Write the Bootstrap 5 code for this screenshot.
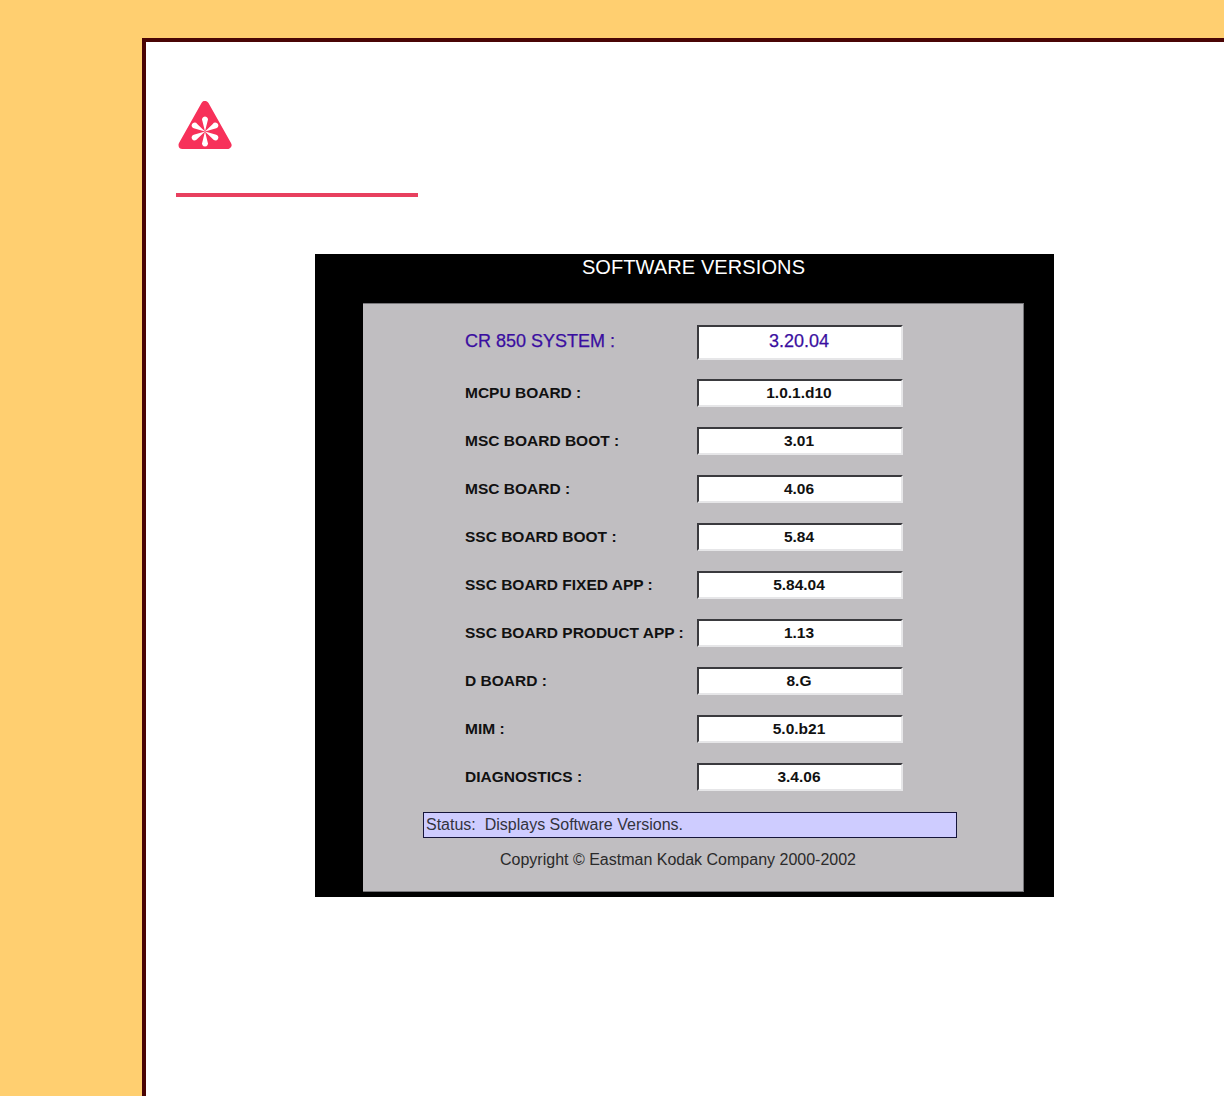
<!DOCTYPE html>
<html lang="en">
<head>
<meta charset="utf-8">
<title>Software Versions</title>
<link rel="stylesheet" href="https://cdn.jsdelivr.net/npm/bootstrap@5.3.0/dist/css/bootstrap.min.css">
<style>
html, body { height: 100%; }
body { background: #ffcf70; margin: 0; overflow: hidden; font-family: "Liberation Sans", Arial, sans-serif; }
.sheet { margin: 38px 0 0 142px; height: 1058px; background: #fff; border-top: 4px solid #4a0505; border-left: 4px solid #4a0505; padding: 59px 0 0 30px; }
.warn-icon { display: block; margin-left: 2px; width: 54px; height: 48px; }
.warn-rule { width: 242px; height: 4px; background: #e8405f; margin-top: 44px; }
.shot { width: 739px; height: 643px; margin: 57px 0 0 139px; background: #000; padding: 0 30px 5px 48px; }
.shot-title { height: 49px; color: #fff; font-size: 20px; line-height: 26px; text-align: center; letter-spacing: .1px; }
.shot-panel { height: 589px; background: #c0bec1; padding: 21px 0 0 102px; border: 1px solid #77767a; border-width: 1px 1px 1px 0; color: #111; }
.ver-row { height: 28px; margin-bottom: 20px; font-weight: 700; font-size: 15.5px; }
.ver-row.sys { height: 35px; margin-bottom: 19px; font-size: 18px; font-weight: 400; color: #3a0ea0; -webkit-text-stroke: .25px #3a0ea0; }
.ver-row.sys .ver-label { padding-bottom: 2px; }
.ver-row.sys .ver-box { padding-bottom: 2px; }
.ver-label { width: 232px; flex: none; }
.ver-box { width: 206px; height: 100%; background: #fff; border: 2px solid; border-color: #3a3a3e #e6e6e8 #e6e6e8 #3a3a3e; display: flex; align-items: center; justify-content: center; padding-right: 2px; }
.status-bar { width: 534px; height: 26px; margin: 21px 0 0 -42px; border: 1px solid #15153a; background: #ceccff; color: #33333d; font-size: 16px; line-height: 24px; padding-left: 2px; white-space: pre; }
.copy-line { width: 355px; margin: 11px 0 0 35px; font-size: 16px; line-height: 22px; color: #2a2a2a; white-space: nowrap; text-align: center; }
</style>
</head>
<body>
<div class="sheet">
  <svg class="warn-icon" viewBox="0 0 54 48" aria-hidden="true">
    <path d="M27 4 L49.5 44 L4.5 44 Z" fill="#f7315a" stroke="#f7315a" stroke-width="8" stroke-linejoin="round"/>
    <g fill="#fff">
      <path id="pt" d="M27 30.5 L24.4 20 a3 3 0 1 1 5.2 0 Z"/>
      <use href="#pt" transform="rotate(60 27 30.5)"/>
      <use href="#pt" transform="rotate(120 27 30.5)"/>
      <use href="#pt" transform="rotate(180 27 30.5)"/>
      <use href="#pt" transform="rotate(240 27 30.5)"/>
      <use href="#pt" transform="rotate(300 27 30.5)"/>
    </g>
  </svg>
  <div class="warn-rule"></div>
  <div class="shot">
    <div class="shot-title">SOFTWARE VERSIONS</div>
    <div class="shot-panel">
      <div class="ver-row sys d-flex align-items-center"><div class="ver-label">CR 850 SYSTEM :</div><div class="ver-box">3.20.04</div></div>
      <div class="ver-row d-flex align-items-center"><div class="ver-label">MCPU BOARD :</div><div class="ver-box">1.0.1.d10</div></div>
      <div class="ver-row d-flex align-items-center"><div class="ver-label">MSC BOARD BOOT :</div><div class="ver-box">3.01</div></div>
      <div class="ver-row d-flex align-items-center"><div class="ver-label">MSC BOARD :</div><div class="ver-box">4.06</div></div>
      <div class="ver-row d-flex align-items-center"><div class="ver-label">SSC BOARD BOOT :</div><div class="ver-box">5.84</div></div>
      <div class="ver-row d-flex align-items-center"><div class="ver-label">SSC BOARD FIXED APP :</div><div class="ver-box">5.84.04</div></div>
      <div class="ver-row d-flex align-items-center"><div class="ver-label">SSC BOARD PRODUCT APP :</div><div class="ver-box">1.13</div></div>
      <div class="ver-row d-flex align-items-center"><div class="ver-label">D BOARD :</div><div class="ver-box">8.G</div></div>
      <div class="ver-row d-flex align-items-center"><div class="ver-label">MIM :</div><div class="ver-box">5.0.b21</div></div>
      <div class="ver-row d-flex align-items-center"><div class="ver-label">DIAGNOSTICS :</div><div class="ver-box">3.4.06</div></div>
      <div class="status-bar">Status:  Displays Software Versions.</div>
      <div class="copy-line">Copyright © Eastman Kodak Company 2000-2002</div>
    </div>
  </div>
</div>
</body>
</html>
